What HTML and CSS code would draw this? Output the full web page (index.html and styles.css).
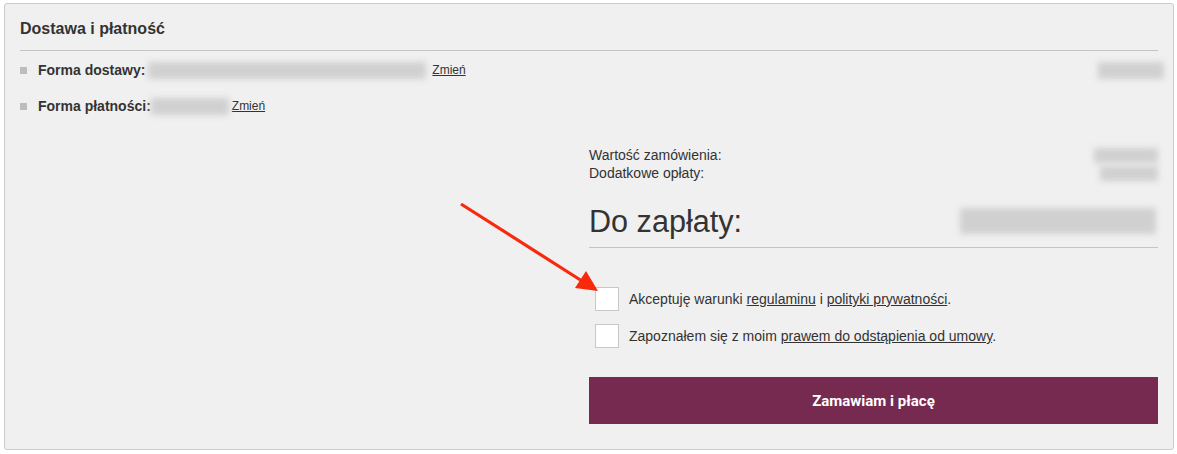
FILE: index.html
```html
<!DOCTYPE html>
<html lang="pl">

<head>
  <meta charset="UTF-8" />
  <meta name="viewport" content="width=device-width, initial-scale=1.0" />
  <link rel="stylesheet" href="styles.css">
  <title>Dostawa i płatność</title>
</head>

<body>
  <div class="panel">
    <h2 class="panel-title">Dostawa i płatność</h2>

    <!-- wybrane opcje -->
    <ul class="options">
      <li class="option">
        <span class="bullet"></span>
        <b>Forma dostawy:</b>
        <span class="blur blur-delivery"></span>
        <a href="#" class="change">Zmień</a>
        <span class="blur blur-cost"></span>
      </li>
      <li class="option">
        <span class="bullet"></span>
        <b>Forma płatności:</b>
        <span class="blur blur-payment"></span>
        <a href="#" class="change">Zmień</a>
      </li>
    </ul>

    <!-- podsumowanie -->
    <div class="summary">
      <div class="sum-row">
        <span>Wartość zamówienia:</span>
        <span class="blur blur-sum"></span>
      </div>
      <div class="sum-row">
        <span>Dodatkowe opłaty:</span>
        <span class="blur blur-fee"></span>
      </div>

      <div class="total">
        <span>Do zapłaty:</span>
        <span class="blur blur-total"></span>
      </div>

      <label class="agree">
        <span class="box"></span>
        <span>Akceptuję warunki <a href="#">regulaminu</a> i <a href="#">polityki prywatności</a>.</span>
      </label>
      <label class="agree">
        <span class="box"></span>
        <span>Zapoznałem się z moim <a href="#">prawem do odstąpienia od umowy</a>.</span>
      </label>

      <button class="order">Zamawiam i płacę</button>
    </div>
  </div>

  <!-- strzałka -->
  <svg class="arrow" width="1177" height="454" viewBox="0 0 1177 454">
    <line x1="461" y1="204" x2="582" y2="281" stroke="#f8290c" stroke-width="3.2" />
    <polygon points="598,291 575,288 586,271" fill="#f8290c" />
  </svg>
</body>

</html>
```

FILE: styles.css
```css
* {
  box-sizing: border-box;
}

body {
  margin: 0;
  background-color: #fff;
  color: #333;
  font-family: "Liberation Sans", Arial, sans-serif;
}

.panel {
  margin: 3px 3px 0 4px;
  height: 447px;
  padding: 0 15px;
  background-color: #f0f0f0;
  border: 1px solid #cbcbcb;
  border-radius: 3px;
}

.panel-title {
  margin: 0;
  padding: 15px 0 11px;
  font-size: 16px;
  line-height: 20px;
  border-bottom: 1px solid #c4c4c4;
}

.options {
  list-style: none;
  margin: 9px 0 0;
  padding: 0;
}

.option {
  display: flex;
  align-items: center;
  height: 20px;
  margin-bottom: 16px;
  font-size: 14px;
}

.bullet {
  width: 7px;
  height: 7px;
  background-color: #bdbdbd;
  margin-right: 11px;
}

.change {
  color: #333;
  font-size: 12px;
}

/* rozmyte kwoty */
.blur {
  display: inline-block;
  background-color: #d0d0d0;
  filter: blur(3px);
}

.blur-delivery {
  width: 278px;
  height: 17px;
  margin: 0 6px 0 3px;
}

.blur-payment {
  width: 78px;
  height: 17px;
  margin-right: 3px;
}

.blur-cost {
  width: 66px;
  height: 17px;
  margin: 0 -6px 0 auto;
}

.summary {
  width: 569px;
  margin: 30px 0 0 auto;
}

.sum-row {
  display: flex;
  justify-content: space-between;
  align-items: center;
  font-size: 14px;
  line-height: 18px;
}

.blur-sum {
  width: 64px;
  height: 15px;
}

.blur-fee {
  width: 58px;
  height: 15px;
}

.total {
  display: flex;
  justify-content: space-between;
  align-items: center;
  margin-top: 21px;
  padding-bottom: 8px;
  font-size: 30.6px;
  line-height: 36px;
  border-bottom: 1px solid #c4c4c4;
}

.blur-total {
  width: 196px;
  height: 26px;
  margin-right: 2px;
}

.agree {
  display: flex;
  align-items: center;
  gap: 10px;
  margin: 13px 0 0 6px;
  font-size: 14px;
}

.agree:first-of-type {
  margin-top: 39px;
}

.agree a {
  color: #333;
}

.box {
  width: 24px;
  height: 24px;
  background-color: #fff;
  border: 1px solid #c8c8c8;
}

.order {
  display: block;
  width: 100%;
  height: 47px;
  margin-top: 29px;
  border: 0;
  background-color: #762a50;
  color: #fff;
  font-family: Roboto, "Liberation Sans", sans-serif;
  font-weight: bold;
  font-size: 15px;
}

.arrow {
  position: absolute;
  top: 0;
  left: 0;
  pointer-events: none;
}
```
